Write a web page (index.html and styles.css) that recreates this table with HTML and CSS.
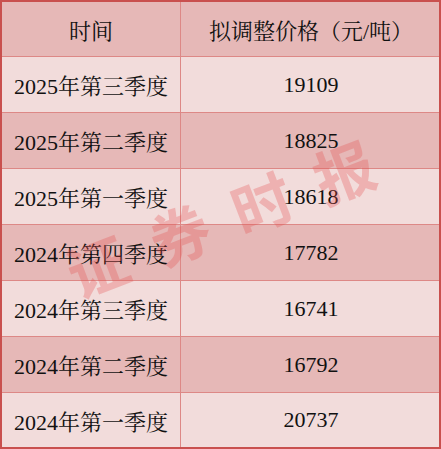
FILE: index.html
```html
<!DOCTYPE html>
<html lang="zh-CN">
<head>
<meta charset="utf-8">
<link rel="stylesheet" href="styles.css">
</head>
<body>
<div class="sheet">
  <div class="table">
    <div class="row head"><div class="cell c1">时间</div><div class="cell c2">拟调整价格（元/吨）</div></div>
    <div class="row light"><div class="cell c1">2025年第三季度</div><div class="cell c2">19109</div></div>
    <div class="row dark"><div class="cell c1">2025年第二季度</div><div class="cell c2">18825</div></div>
    <div class="row light"><div class="cell c1">2025年第一季度</div><div class="cell c2">18618</div></div>
    <div class="row dark"><div class="cell c1">2024年第四季度</div><div class="cell c2">17782</div></div>
    <div class="row light"><div class="cell c1">2024年第三季度</div><div class="cell c2">16741</div></div>
    <div class="row dark"><div class="cell c1">2024年第二季度</div><div class="cell c2">16792</div></div>
    <div class="row light last"><div class="cell c1">2024年第一季度</div><div class="cell c2">20737</div></div>
  </div>
  <div class="watermark">证券时报</div>
</div>
</body>
</html>
```
FILE: styles.css
```css
html, body {
  margin: 0;
  padding: 0;
  background: #f2dcdb;
}
.sheet {
  position: relative;
  width: 441px;
  height: 449px;
  overflow: hidden;
}
.table {
  box-sizing: border-box;
  width: 441px;
  height: 449px;
  border: 2px solid #c9504e;
  display: flex;
  flex-direction: column;
  font-family: "Liberation Serif", "Noto Serif CJK SC", "Noto Sans CJK SC", serif;
  font-size: 22px;
  color: #111;
}
.row {
  display: grid;
  grid-template-columns: 179px 1fr;
  height: 55px;
  border-bottom: 1px solid #dd8886;
}
.row.head { height: 54px; background: #e6b8b7; }
.row.last { height: 54px; border-bottom: none; }
.row.light { background: #f2dcdb; }
.row.dark { background: #e6b8b7; }
.cell {
  display: flex;
  align-items: center;
  justify-content: center;
  white-space: nowrap;
}
.c1 { border-right: 1px solid #dd8886; }
.c2 { padding-left: 2px; }
.watermark {
  position: absolute;
  left: 220px;
  top: 217px;
  padding-left: 28px;
  font-family: "Noto Sans CJK SC", sans-serif;
  font-weight: 700;
  font-size: 60px;
  letter-spacing: 28px;
  color: rgba(228, 80, 80, 0.3);
  transform: translate(-50%, -50%) rotate(-21deg);
  white-space: nowrap;
  pointer-events: none;
  line-height: 1;
}
```
